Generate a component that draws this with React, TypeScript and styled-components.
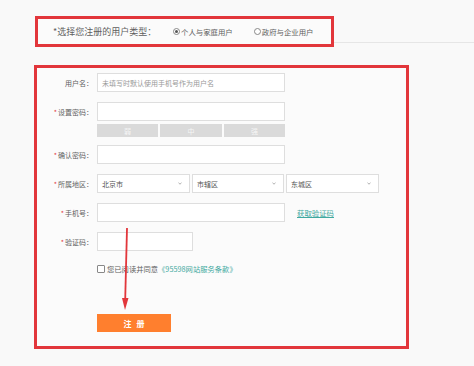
import React from "react";
import styled, { createGlobalStyle } from "styled-components";

const Global = createGlobalStyle`
  html, body { margin: 0; padding: 0; background: #f9f9f9; }
  body { font-family: "Noto Sans CJK SC", "Noto Sans", sans-serif; }
  * { box-sizing: border-box; }
`;

const Page = styled.div`
  width: 474px;
  height: 366px;
  background: #f9f9f9;
  padding-top: 16px;
  overflow: hidden;
`;

const TopRow = styled.div`
  display: flex;
  align-items: flex-start;
`;

const TypeBar = styled.div`
  margin-left: 35px;
  width: 299px;
  height: 31px;
  border: 3px solid #e2363b;
  background: #fbfbfb;
  display: flex;
  align-items: center;
  gap: 21px;
  padding-left: 15px;
  flex-shrink: 0;
`;

const TypeTitle = styled.span`
  font-size: 9px;
  color: #5f5f5f;
  white-space: nowrap;
  width: 99px;
  flex-shrink: 0;
`;

const RadioOption = styled.span`
  display: inline-flex;
  align-items: center;
  font-size: 7.4px;
  color: #5f5f5f;
  white-space: nowrap;
  flex-shrink: 0;
`;

const RadioDot = styled.span<{ $on?: boolean }>`
  width: 7px;
  height: 7px;
  border-radius: 50%;
  border: 1px solid #888;
  background: #fff;
  margin-right: 1px;
  display: inline-flex;
  align-items: center;
  justify-content: center;
  &::after {
    content: "";
    width: 3px;
    height: 3px;
    border-radius: 50%;
    background: ${(p) => (p.$on ? "#555" : "transparent")};
  }
`;

const Rule = styled.div`
  flex: 1;
  height: 27px;
  border-bottom: 1px solid #e6e6e6;
`;

const FormBox = styled.div`
  position: relative;
  margin-top: 18px;
  margin-left: 34px;
  width: 375px;
  height: 284px;
  border: 3px solid #e2363b;
  background: #fbfbfb;
  padding-top: 5px;
  display: flex;
  flex-direction: column;
`;

const Row = styled.div<{ $mt?: number }>`
  display: flex;
  align-items: center;
  margin-top: ${(p) => p.$mt ?? 0}px;
`;

const Label = styled.div`
  width: 56px;
  margin-right: 4px;
  text-align: right;
  font-size: 7px;
  color: #5f5f5f;
  white-space: nowrap;
`;

const Star = styled.span`
  color: #e2363b;
  margin-right: 1px;
`;

const Input = styled.div<{ $w?: number }>`
  width: ${(p) => p.$w ?? 188}px;
  height: 19px;
  border: 1px solid #dedede;
  background: #fff;
  font-size: 7px;
  color: #999;
  display: flex;
  align-items: center;
  padding-left: 4px;
  white-space: nowrap;
`;

const Strength = styled.div`
  margin-left: 60px;
  margin-top: 3px;
  width: 188px;
  display: flex;
  gap: 2px;
`;

const Bar = styled.div<{ $w: number }>`
  width: ${(p) => p.$w}px;
  height: 13px;
  background: #dadada;
  color: #f6f6f6;
  font-size: 7px;
  display: flex;
  align-items: center;
  justify-content: center;
`;

const Selects = styled.div`
  display: flex;
  gap: 2px;
`;

const Select = styled.div<{ $w: number }>`
  width: ${(p) => p.$w}px;
  height: 19px;
  border: 1px solid #dedede;
  background: #fff;
  font-size: 7px;
  color: #555;
  display: flex;
  align-items: center;
  justify-content: space-between;
  padding: 0 7px 0 4px;
`;

const Link = styled.span`
  margin-left: 12px;
  font-size: 7.4px;
  color: #3fa9a0;
  text-decoration: underline;
  white-space: nowrap;
`;

const AgreeRow = styled.div`
  margin-top: 12px;
  margin-left: 60px;
  height: 12px;
  display: flex;
  align-items: center;
  font-size: 7.3px;
  color: #5f5f5f;
  white-space: nowrap;
`;

const Check = styled.span`
  width: 8px;
  height: 8px;
  border: 1px solid #888;
  border-radius: 1px;
  background: #fff;
  margin-right: 2px;
`;

const Terms = styled.span`
  color: #3fa9a0;
`;

const Submit = styled.div`
  margin-top: 39px;
  margin-left: 60px;
  width: 74px;
  height: 18px;
  background: #ff7f2e;
  color: #fff;
  font-size: 8px;
  font-weight: bold;
  letter-spacing: 5px;
  padding-left: 5px;
  display: flex;
  align-items: center;
  justify-content: center;
`;

const Arrow = styled.svg`
  position: absolute;
  left: 82px;
  top: 158px;
`;

const Chevron = () => (
  <svg width="4" height="3" viewBox="0 0 4 3">
    <path d="M0.5 0.8 L2 2.2 L3.5 0.8" stroke="#999" strokeWidth="0.8" fill="none" />
  </svg>
);

export default function App() {
  return (
    <>
      <Global />
      <Page>
        <TopRow>
          <TypeBar>
            <TypeTitle>*选择您注册的用户类型：</TypeTitle>
            <RadioOption>
              <RadioDot $on />
              个人与家庭用户
            </RadioOption>
            <RadioOption>
              <RadioDot />
              政府与企业用户
            </RadioOption>
          </TypeBar>
          <Rule />
        </TopRow>
        <FormBox>
          <Row>
            <Label>用户名：</Label>
            <Input>未填写时默认使用手机号作为用户名</Input>
          </Row>
          <Row $mt={10}>
            <Label>
              <Star>*</Star>设置密码：
            </Label>
            <Input />
          </Row>
          <Strength>
            <Bar $w={61}>弱</Bar>
            <Bar $w={62}>中</Bar>
            <Bar $w={61}>强</Bar>
          </Strength>
          <Row $mt={8}>
            <Label>
              <Star>*</Star>确认密码：
            </Label>
            <Input />
          </Row>
          <Row $mt={10}>
            <Label>
              <Star>*</Star>所属地区：
            </Label>
            <Selects>
              <Select $w={93}>
                北京市
                <Chevron />
              </Select>
              <Select $w={92}>
                市辖区
                <Chevron />
              </Select>
              <Select $w={93}>
                东城区
                <Chevron />
              </Select>
            </Selects>
          </Row>
          <Row $mt={10}>
            <Label>
              <Star>*</Star>手机号：
            </Label>
            <Input />
            <Link>获取验证码</Link>
          </Row>
          <Row $mt={10}>
            <Label>
              <Star>*</Star>验证码：
            </Label>
            <Input $w={96} />
          </Row>
          <AgreeRow>
            <Check />
            您已阅读并同意<Terms>《95598网站服务条款》</Terms>
          </AgreeRow>
          <Submit>注册</Submit>
          <Arrow width="14" height="86" viewBox="0 0 14 86">
            <line x1="8" y1="2" x2="6.2" y2="74" stroke="#e2363b" strokeWidth="1.8" />
            <polygon points="3,72 9.5,72 6,84" fill="#e2363b" />
          </Arrow>
        </FormBox>
      </Page>
    </>
  );
}
